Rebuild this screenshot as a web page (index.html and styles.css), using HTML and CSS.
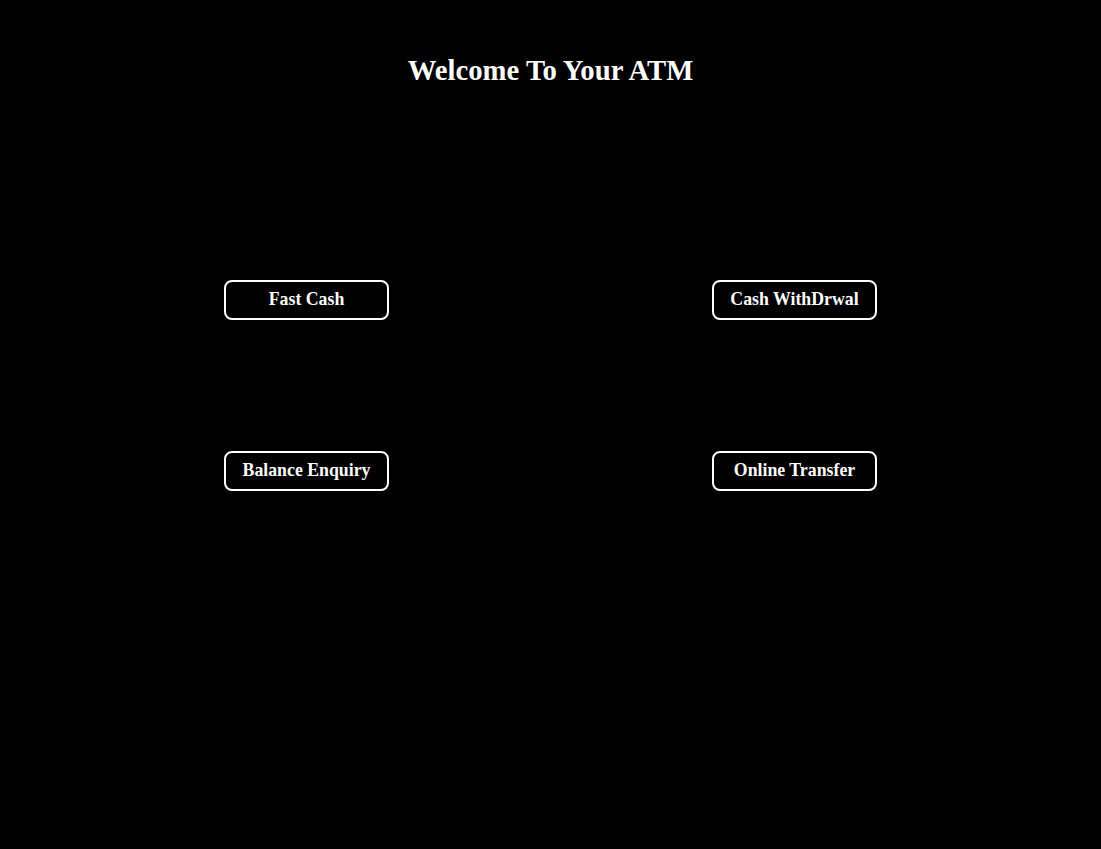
FILE: index.html
```html
<!DOCTYPE html>
<html>
<head>
<meta charset="utf-8">
<link rel="stylesheet" href="styles.css">
</head>
<body>
<h1 class="title">Welcome To Your ATM</h1>
<div class="options">
  <div class="row">
    <button class="btn">Fast Cash</button>
    <button class="btn">Cash WithDrwal</button>
  </div>
  <div class="row">
    <button class="btn">Balance Enquiry</button>
    <button class="btn">Online Transfer</button>
  </div>
</div>
</body>
</html>
```
FILE: styles.css
```css
html, body {
  margin: 0;
  padding: 0;
  background: #000;
  color: #fff;
  font-family: "Liberation Serif", "Times New Roman", serif;
  height: 100%;
}
.title {
  margin: 0;
  padding-top: 53px;
  font-size: 28.7px;
  font-weight: bold;
  text-align: center;
  line-height: 34px;
}
.options {
  display: flex;
  flex-direction: column;
  gap: 131px;
  padding: 0 224px;
  margin-top: 193px;
}
.row {
  display: flex;
  justify-content: space-between;
}
.btn {
  width: 165px;
  height: 40px;
  background: #000;
  color: #fff;
  border: 2px solid #fff;
  border-radius: 8px;
  font-family: "Liberation Serif", "Times New Roman", serif;
  font-weight: bold;
  font-size: 17.8px;
  padding: 0 0 2px;
}
```
